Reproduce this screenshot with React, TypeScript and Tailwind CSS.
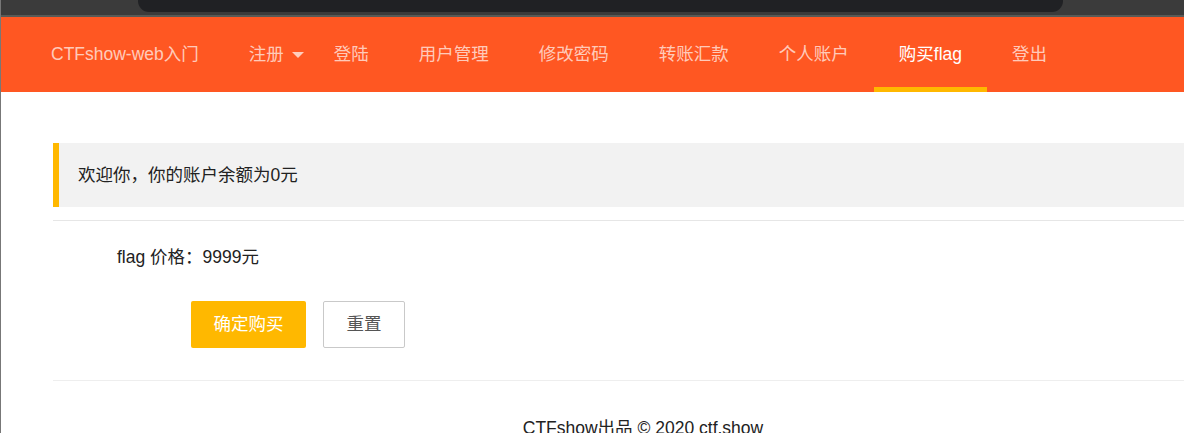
const navItems = ["登陆", "用户管理", "修改密码", "转账汇款", "个人账户"];

const font = { fontFamily: '"Liberation Sans", Arial, "Noto Sans CJK SC", sans-serif' };

const App = () => {
  return (
    <div
      className="h-[433px] w-[1184px] overflow-hidden border-l border-[#777] bg-white text-[17.5px]"
      style={font}
    >
      {/* browser chrome */}
      <div className="h-[15px] bg-[#3b3b3b] pl-[137px]">
        <div className="h-[12px] w-[925px] rounded-b-[11px] bg-[#202124]" />
      </div>
      <div className="h-[2px] bg-[#575a57]" />

      {/* nav */}
      <ul className="flex h-[75px] items-stretch bg-[#FF5722] pl-[25px] text-white/70">
        <li className="flex items-center px-[25px]">CTFshow-web入门</li>
        <li className="flex items-center pl-[25px] pr-[5px]">
          注册
          <span className="ml-2 h-0 w-0 border-x-[6px] border-t-[6px] border-x-transparent border-t-white/70" />
        </li>
        {navItems.map((item) => (
          <li key={item} className="flex items-center px-[25px]">
            {item}
          </li>
        ))}
        <li className="relative flex items-center px-[25px] text-white">
          购买flag
          <span className="absolute bottom-0 left-0 right-0 h-[5px] bg-[#FFB800]" />
        </li>
        <li className="flex items-center px-[25px]">登出</li>
      </ul>

      {/* content */}
      <div className="ml-[52px] w-[1180px] text-[#222]">
        <div className="mt-[51px] flex h-[64px] items-center border-l-[6px] border-[#FFB800] bg-[#f2f2f2] pl-[19px]">
          欢迎你，你的账户余额为0元
        </div>
        <div className="mt-[13px] h-px bg-[#e6e6e6]" />

        <div className="ml-[64px] mt-[23px] leading-[27px]">flag 价格：9999元</div>

        <div className="ml-[138px] mt-[30px] flex gap-[17px]">
          <button className="h-[47px] w-[115px] rounded-[2px] bg-[#FFB800] text-white">确定购买</button>
          <button className="h-[47px] w-[82px] rounded-[2px] border border-[#c9c9c9] bg-white text-[#555]">
            重置
          </button>
        </div>

        <div className="mt-[32px] h-px bg-[#eee]" />
        <div className="pt-[34px] text-center leading-[27px]">CTFshow出品 © 2020 ctf.show</div>
      </div>
    </div>
  );
};

export default App;
